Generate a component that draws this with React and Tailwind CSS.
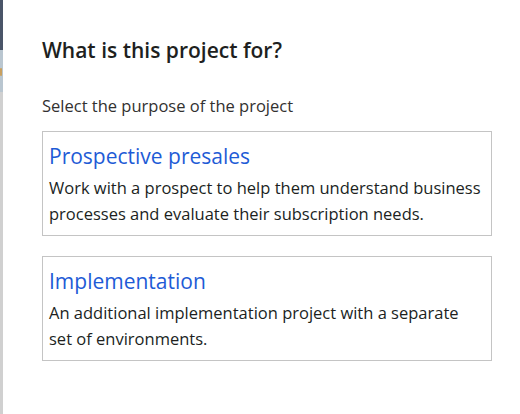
export default function App() {
  return (
    <div className="flex h-[414px] w-[520px] overflow-hidden bg-white" style={{ fontFamily: '"Open Sans", "Noto Sans", sans-serif' }}>
      <div className="flex w-[3px] shrink-0 flex-col">
        <div className="h-[50px] bg-[#4a5568]" />
        <div className="relative h-[42px] bg-[#b9c6d0]">
          <div className="absolute left-0 top-[18px] h-[8px] w-[2px] rounded-full bg-[#c9a060]" />
        </div>
        <div className="flex-1 bg-[#d0d0d0]" />
      </div>
      <div className="flex flex-1 flex-col pl-[39px] pr-[28px] pt-[36px]">
        <h1 className="text-[21px] font-semibold leading-[28px] text-[#201f1e]">What is this project for?</h1>
        <p className="mt-[30px] text-[16.5px] leading-[24px] text-[#323130]">Select the purpose of the project</p>
        <div className="mt-[13px] flex flex-col gap-[20px]">
          <div className="border border-[#c4c4c4] pb-[8px] pl-[6px] pr-[10px] pt-[9px]">
            <div className="text-[21px] leading-[30px] text-[#1e5bd6]">Prospective presales</div>
            <div className="mt-[4px] text-[16.5px] leading-[26px] text-[#201f1e]">
              Work with a prospect to help them understand business processes and evaluate their subscription needs.
            </div>
          </div>
          <div className="border border-[#c4c4c4] pb-[8px] pl-[6px] pr-[10px] pt-[9px]">
            <div className="text-[21px] leading-[30px] text-[#1e5bd6]">Implementation</div>
            <div className="mt-[4px] text-[16.5px] leading-[26px] text-[#201f1e]">
              An additional implementation project with a separate set of environments.
            </div>
          </div>
        </div>
      </div>
    </div>
  );
}
